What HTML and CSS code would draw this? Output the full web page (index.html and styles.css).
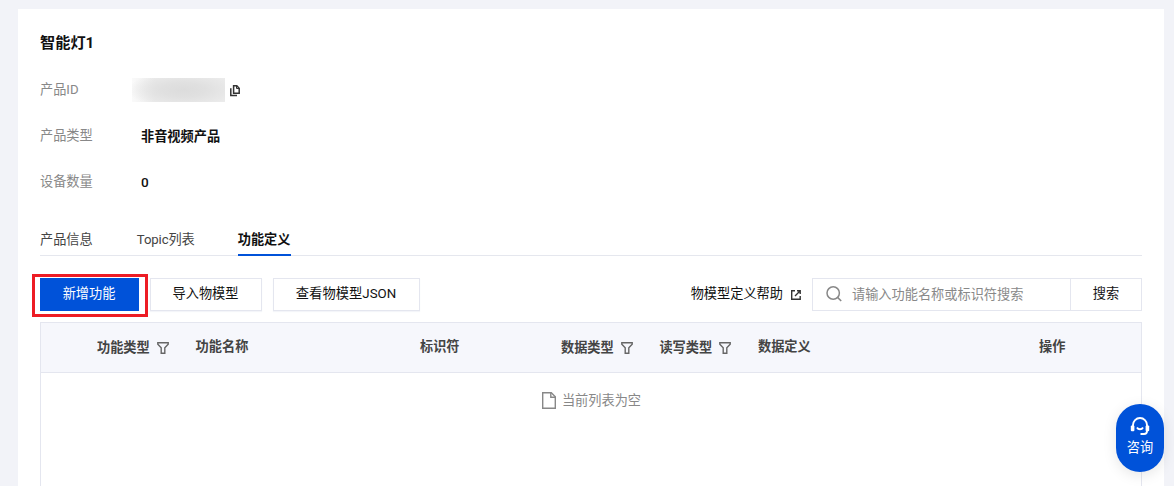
FILE: index.html
```html
<!DOCTYPE html>
<html lang="zh-CN">
<head>
    <meta charset="UTF-8">
    <meta name="viewport" content="width=device-width, initial-scale=1.0">
    <title>智能灯1</title>
    <link rel="stylesheet" href="styles.css">
</head>
<body>
    <main class="panel">
        <h1>智能灯1</h1>
        <dl class="info">
            <div class="info-row">
                <dt>产品ID</dt>
                <dd class="masked">
                    <span class="mask"></span>
                    <svg class="copy-icon" width="10" height="13" viewBox="0 0 10 13" fill="none" stroke="#333" stroke-width="1.5">
                        <path d="M3.6 1.8h3.2l2.4 2.4v5H3.6z"/>
                        <path d="M6.5 1.7v2.8h2.8" stroke-width="1"/>
                        <path d="M.8 4.2v7.2H7"/>
                    </svg>
                </dd>
            </div>
            <div class="info-row">
                <dt>产品类型</dt>
                <dd>非音视频产品</dd>
            </div>
            <div class="info-row">
                <dt>设备数量</dt>
                <dd class="count">0</dd>
            </div>
        </dl>

        <nav class="tabs">
            <a class="tab">产品信息</a>
            <a class="tab">Topic列表</a>
            <a class="tab active">功能定义</a>
        </nav>

        <div class="toolbar">
            <div class="highlight">
                <button class="btn btn-primary">新增功能</button>
            </div>
            <button class="btn btn-import">导入物模型</button>
            <button class="btn btn-json">查看物模型JSON</button>
            <a class="help">
                物模型定义帮助
                <svg width="10" height="10" viewBox="0 0 10 10" fill="none" stroke="#333" stroke-width="1.4">
                    <path d="M4 .8H.7v8.5h8.5V6"/>
                    <path d="M6 .8h3.2V4M9 1 4 6"/>
                </svg>
            </a>
            <div class="search">
                <div class="search-input">
                    <svg width="16" height="16" viewBox="0 0 16 16" fill="none" stroke="#888" stroke-width="1.5">
                        <circle cx="7.2" cy="7" r="6.2"/>
                        <path d="m11.6 11.4 3.6 3.6"/>
                    </svg>
                    <span>请输入功能名称或标识符搜索</span>
                </div>
                <button class="search-btn">搜索</button>
            </div>
        </div>

        <section class="table">
            <div class="thead">
                <div class="th filter">功能类型
                    <svg width="12" height="12" viewBox="0 0 12 12"><path d="M.8.8h10.4v1.4L7.8 5.8v5.5H4.2V5.8L.8 2.2z"/></svg>
                </div>
                <div class="th">功能名称</div>
                <div class="th">标识符</div>
                <div class="th filter">数据类型
                    <svg width="12" height="12" viewBox="0 0 12 12"><path d="M.8.8h10.4v1.4L7.8 5.8v5.5H4.2V5.8L.8 2.2z"/></svg>
                </div>
                <div class="th filter">读写类型
                    <svg width="12" height="12" viewBox="0 0 12 12"><path d="M.8.8h10.4v1.4L7.8 5.8v5.5H4.2V5.8L.8 2.2z"/></svg>
                </div>
                <div class="th">数据定义</div>
                <div class="th">操作</div>
            </div>
            <div class="empty">
                <svg width="14" height="17" viewBox="0 0 14 17" fill="none" stroke="#888" stroke-width="1.4">
                    <path d="M.7.7h8.6l4 4v11.6H.7z"/>
                    <path d="M8.8.7v4.5h4.5"/>
                </svg>
                <span>当前列表为空</span>
            </div>
        </section>
    </main>

    <a class="consult">
        <svg width="20" height="20" viewBox="0 0 20 20" fill="none" stroke="#fff" stroke-width="1.9">
            <path d="M3 10V9a7 7 0 0 1 14 0v6a3 3 0 0 1-3 3h-3.5"/>
            <path d="M7 11.5a3.4 3.4 0 0 0 6 0"/>
            <rect x=".8" y="9.5" width="3.6" height="5.8" rx="1" fill="#fff" stroke="none"/>
            <rect x="15.6" y="9.5" width="3.6" height="5.8" rx="1" fill="#fff" stroke="none"/>
        </svg>
        <span>咨询</span>
    </a>
</body>
</html>
```
FILE: styles.css
```css
* {
    box-sizing: border-box;
}
body {
    margin: 0;
    height: 486px;
    overflow: hidden;
    padding: 9px 10px 0 18px;
    background: #f2f3f8;
    color: #111;
    font-family: Roboto, "Noto Sans CJK SC", sans-serif;
    font-size: 13.2px;
    line-height: 20px;
}
svg {
    flex: none;
}
button {
    font: inherit;
    color: inherit;
}
.panel {
    display: flex;
    flex-direction: column;
    height: 477px;
    padding: 24px 22px 0;
    background: #fff;
}
h1 {
    margin: 0;
    font-size: 15.2px;
    line-height: 20px;
    font-weight: 700;
}
.info {
    margin: 14px 0 0;
}
.info-row {
    display: flex;
    align-items: center;
    height: 46px;
}
.info dt {
    width: 101px;
    color: #888;
    padding-bottom: 1px;
}
.info dd {
    margin: 0;
    font-weight: 700;
    padding-top: 1px;
}
.info .count {
    padding-top: 0;
    font-size: 13.6px;
    font-weight: 500;
}
.info .masked {
    display: flex;
    align-items: center;
    margin-left: -9px;
    padding: 0;
    gap: 5px;
}
.mask {
    width: 93px;
    height: 24px;
    background: radial-gradient(ellipse 60% 75% at 55% 50%, #dcdcdc, #e0e0e0 40%, rgba(232, 232, 232, 0)), linear-gradient(90deg, #fafafa, #ececec 25%, #ececec);
}
.tabs {
    display: flex;
    height: 35px;
    margin-top: 16px;
    border-bottom: 1px solid #e5e7ee;
}
.tab {
    height: 35px;
    margin-right: 44px;
    padding-top: 9px;
    color: #444;
}
.tab:nth-child(2) {
    margin-right: 43px;
    letter-spacing: -0.1px;
}
.tab.active {
    width: 53px;
    color: #111;
    font-weight: 700;
    white-space: nowrap;
    border-bottom: 2px solid #0052d9;
}
.toolbar {
    display: flex;
    align-items: center;
    height: 43px;
    margin: 18px 0 0 -8px;
}
.highlight {
    width: 116px;
    height: 43px;
    padding: 1px 0 0 5px;
    border: 3px solid #ed1c24;
}
.btn {
    height: 33px;
    padding: 0 1px 2px 0;
    border: 1px solid #e4e6ef;
    background: #fff;
    margin-bottom: 2px;
}
.btn-primary {
    display: block;
    width: 99px;
    border: 0;
    background: #0052d9;
    color: #fff;
}
.btn-import {
    width: 112px;
    margin-left: 2px;
    box-shadow: 0 1px 1px #f4f5f9;
}
.btn-json {
    width: 147px;
    margin-left: 11px;
    font-size: 13.3px;
    box-shadow: 0 1px 1px #f4f5f9;
}
.help {
    display: flex;
    align-items: center;
    gap: 8px;
    margin-left: auto;
    padding-bottom: 3px;
}
.help svg {
    margin-top: 2px;
}
.search {
    display: flex;
    width: 330px;
    height: 33px;
    margin: 0 0 2px 11px;
    border: 1px solid #e4e6ef;
}
.search-input {
    display: flex;
    align-items: center;
    gap: 10px;
    flex: 1;
    padding: 0 0 1px 13px;
    color: #888;
}
.search-input span {
    padding-top: 1px;
}
.search-btn {
    width: 71px;
    border: 0;
    border-left: 1px solid #e4e6ef;
    padding: 0 0 2px;
    background: none;
}
.table {
    flex: 1;
    margin-top: 5px;
    border: 1px solid #e4e6ef;
    border-bottom: 0;
}
.thead {
    display: grid;
    grid-template-columns: 98.6px 224.4px 141px 98.4px 98.6px 281px 1fr;
    height: 50px;
    padding: 14px 0 0 56px;
    border-bottom: 1px solid #e4e6ef;
    background: #f6f7fc;
}
.th {
    height: 20px;
    color: #444;
    font-weight: 700;
    white-space: nowrap;
}
.filter {
    display: flex;
    align-items: center;
    gap: 7px;
    height: 22px;
}
.filter svg {
    margin-bottom: 1px;
    fill: none;
    stroke: #666;
    stroke-width: 1.4;
}
.empty {
    display: flex;
    justify-content: center;
    align-items: center;
    gap: 6px;
    height: 56px;
    padding-left: 1px;
    color: #888;
}
.empty svg {
    margin-bottom: 1px;
}
.consult {
    position: absolute;
    left: 1116px;
    top: 404px;
    width: 48px;
    height: 68px;
    display: flex;
    flex-direction: column;
    align-items: center;
    padding-top: 12px;
    gap: 2px;
    border-radius: 24px;
    background: #0052d9;
    color: #fff;
    box-shadow: 0 3px 14px rgba(0, 0, 0, 0.1);
}
```
